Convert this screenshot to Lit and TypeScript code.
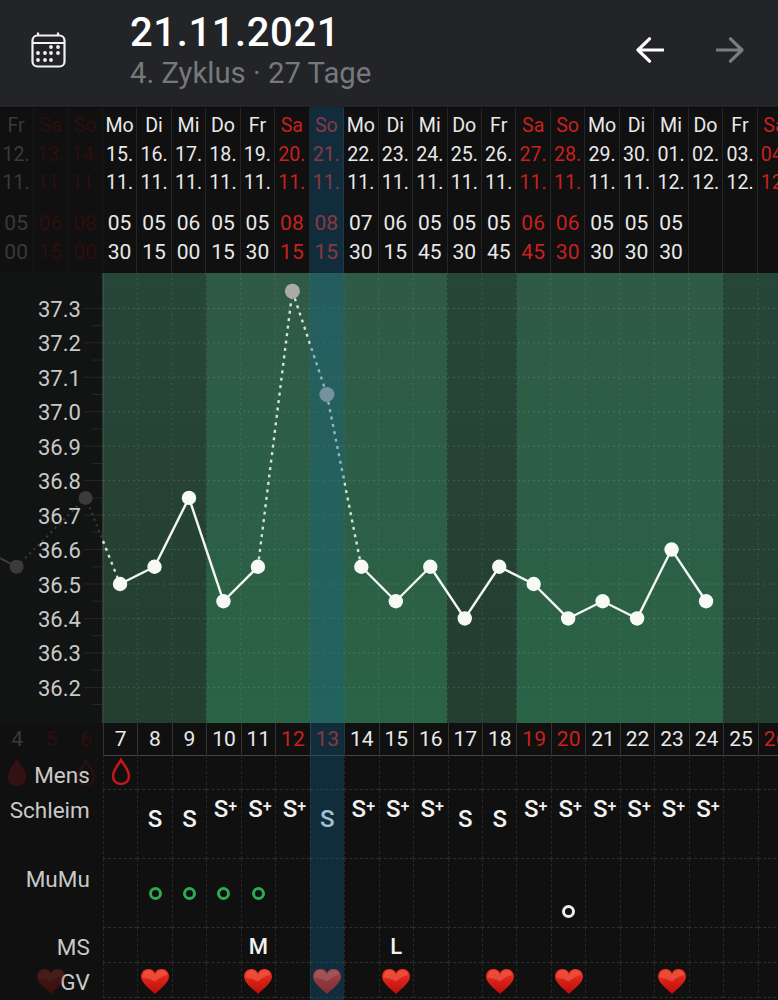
import { LitElement, css, html, svg } from "lit";
import { customElement } from "lit/decorators.js";

const COL = 34.47;
const ORIGIN = -0.6;
const CHART_H = 450;

// day, weekday, date, month, hour, minute
const RAW = [
  "4 Fr 12 11 05 00", "5 Sa 13 11 06 15", "6 So 14 11 08 00", "7 Mo 15 11 05 30",
  "8 Di 16 11 05 15", "9 Mi 17 11 06 00", "10 Do 18 11 05 15", "11 Fr 19 11 05 30",
  "12 Sa 20 11 08 15", "13 So 21 11 08 15", "14 Mo 22 11 07 30", "15 Di 23 11 06 15",
  "16 Mi 24 11 05 45", "17 Do 25 11 05 30", "18 Fr 26 11 05 45", "19 Sa 27 11 06 45",
  "20 So 28 11 06 30", "21 Mo 29 11 05 30", "22 Di 30 11 05 30", "23 Mi 01 12 05 30",
  "24 Do 02 12", "25 Fr 03 12", "26 Sa 04 12",
];

const DAYS = RAW.map((r) => {
  const [n, wd, date, month, hour, min] = r.split(" ");
  return { n: +n, wd, date, month, hour, min };
});

const TEMPS: Record<number, number> = {
  7: 36.5, 8: 36.55, 9: 36.75, 10: 36.45, 11: 36.55, 12: 37.35, 13: 37.05, 14: 36.55, 15: 36.45,
  16: 36.55, 17: 36.4, 18: 36.55, 19: 36.5, 20: 36.4, 21: 36.45, 22: 36.4, 23: 36.6, 24: 36.45,
};

const SCHLEIM: Record<number, string> = {
  8: "S", 9: "S", 10: "S+", 11: "S+", 12: "S+", 13: "S", 14: "S+", 15: "S+", 16: "S+",
  17: "S", 18: "S", 19: "S+", 20: "S+", 21: "S+", 22: "S+", 23: "S+", 24: "S+",
};
const GREEN_RINGS = [8, 9, 10, 11];
const HEARTS = [8, 11, 13, 15, 18, 20, 23];
const MS: Record<number, string> = { 11: "M", 15: "L" };

const cx = (day: number) => ORIGIN + (day - 4 + 0.5) * COL;
const colX = (day: number) => ORIGIN + (day - 4) * COL;
const ty = (t: number) => 311 - (t - 36.5) * 344.5;

const heart = (dim = false) => html`
  <svg class="heart ${dim ? "dim" : ""}" viewBox="0 0 28 25">
    <path fill="url(#heart-fill)" d="M14 25C9 20 0 14 0 7.5C0 3 3.4 0 7.4 0C10.4 0 12.8 1.6 14 4C15.2 1.6 17.6 0 20.6 0C24.6 0 28 3 28 7.5C28 14 19 20 14 25Z"/>
    <path fill="#f4604a" opacity=".6" d="M1.5 9C1 4.5 4 1.2 7.6 1.2C10.4 1.2 12.6 3 14 6C15.4 3.2 17.6 1.2 20.4 1.2C23.6 1.2 26 3.4 26.4 6C22 6.5 18 9 14 12.5C10 10 6 9 1.5 9Z"/>
  </svg>`;

const drop = (cls = "") => html`
  <svg class="drop ${cls}" viewBox="0 0 20 28">
    <path stroke="#c4161c" stroke-width="2.6" d="M10 2C7 7 2 12 2 18C2 23 5.6 26 10 26C14.4 26 18 23 18 18C18 12 13 7 10 2Z"/>
  </svg>`;

@customElement("app-root")
export class AppRoot extends LitElement {
  private weekend(n: number) {
    return (n - 5) % 7 === 0 || (n - 6) % 7 === 0;
  }

  private tone(n: number) {
    return `${n < 7 ? "past" : ""} ${this.weekend(n) ? "red" : ""}`;
  }

  private renderHeader() {
    return html`
      <header>
        <svg class="cal" viewBox="0 0 36 36">
          <g fill="none" stroke="#f2f2f2" stroke-width="2.2">
            <rect x="1.5" y="3.5" width="32" height="31" rx="5"/>
            <path d="M1.5 11H33.5M7 0.5V4M27 0.5V4"/>
          </g>
          <g fill="#f2f2f2">
            ${[[20, 15], [27, 15], [7, 21], [14, 21], [20, 21], [27, 21], [7, 28], [14, 28], [20, 28]].map(
              ([x, y]) => svg`<circle cx=${x} cy=${y} r="1.9"/>`
            )}
          </g>
        </svg>
        <div class="titles">
          <div class="title">21.11.2021</div>
          <div class="sub">4. Zyklus · 27 Tage</div>
        </div>
        <div class="arrows">
          <svg viewBox="0 0 28 26"><path fill="none" stroke="#fff" stroke-width="3.2" stroke-linecap="round" stroke-linejoin="round" d="M27 13H2M13.5 1.8L2 13L13.5 24.2"/></svg>
          <svg viewBox="0 0 28 26"><path fill="none" stroke="#7c7d80" stroke-width="3.2" stroke-linecap="round" stroke-linejoin="round" d="M1 13H26M14.5 1.8L26 13L14.5 24.2"/></svg>
        </div>
      </header>`;
  }

  private renderDates() {
    return html`
      <section class="dates grid">
        ${DAYS.map(
          (d) => html`
            <div class="date-col ${this.tone(d.n)}">
              <span>${d.wd}</span>
              <span>${d.date}.</span>
              <span>${d.month}.</span>
              <span class="hour">${d.hour ?? ""}</span>
              <span class="min">${d.min ?? ""}</span>
            </div>`
        )}
      </section>`;
  }

  private renderChart() {
    const bands: [number, number, string][] = [
      [7, 10, "url(#band-dark)"],
      [10, 17, "url(#band-light)"],
      [17, 19, "url(#band-dark)"],
      [19, 25, "url(#band-light)"],
      [25, 28, "url(#band-dark)"],
    ];
    const scale = Array.from({ length: 12 }, (_, i) => 36.2 + i * 0.1);
    const ticks = Array.from({ length: 12 }, (_, i) => 36.15 + i * 0.1);
    const days = Object.keys(TEMPS).map(Number);
    const dotted = [[11, 12], [12, 13], [13, 14]];
    const solid = days.slice(0, -1).filter((n) => !dotted.some(([a]) => a === n));
    const p = (n: number) => `${cx(n)},${ty(TEMPS[n])}`;

    return html`
      <svg class="chart" viewBox="0 0 778 ${CHART_H}" width="778" height=${CHART_H}>
        <defs>
          <linearGradient id="band-dark" x1="0" y1="0" x2="0" y2="1">
            <stop offset="0" stop-color="#27463a"/><stop offset="1" stop-color="#243e30"/>
          </linearGradient>
          <linearGradient id="band-light" x1="0" y1="0" x2="0" y2="1">
            <stop offset="0" stop-color="#2f5a46"/><stop offset="1" stop-color="#2a6345"/>
          </linearGradient>
          <linearGradient id="heart-fill" x1="0" y1="0" x2="0" y2="1">
            <stop offset="0" stop-color="#ee3526"/><stop offset="1" stop-color="#bd0c08"/>
          </linearGradient>
        </defs>
        <rect width="103" height=${CHART_H} fill="#111412"/>
        ${bands.map(([a, b, f]) => svg`<rect x=${colX(a)} width=${(b - a) * COL} height=${CHART_H} fill=${f}/>`)}

        ${ticks.map((t) => svg`<path d="M92 ${ty(t)}H102" stroke="#fff" stroke-opacity=".09"/>`)}
        ${scale.map(
          (t) => svg`
            <path d="M84 ${ty(t)}H102" stroke="#fff" stroke-opacity=".09"/>
            <path d="M103 ${ty(t)}H778" stroke="#fff" stroke-opacity=".14" stroke-dasharray="2 3"/>
            <text x="38" y=${ty(t) + 8.5}>${t.toFixed(1)}</text>`
        )}
        ${DAYS.filter((d) => d.n >= 8).map(
          (d) => svg`<path d="M${colX(d.n)} 0V${CHART_H}" stroke="#fff" stroke-opacity=".1" stroke-dasharray="2 3"/>`
        )}
        <path d="M${colX(7)} 0V${CHART_H}" stroke="#fff" stroke-opacity=".18"/>

        <g stroke="#3c3c3c" stroke-width="2" fill="none">
          <path d="M0 ${ty(36.575)}L${cx(4)} ${ty(36.55)}"/>
          <path stroke-dasharray="2 4" d="M${cx(4)} ${ty(36.55)}L${cx(6)} ${ty(36.75)}L103 ${ty(36.625)}"/>
        </g>
        <circle cx=${cx(4)} cy=${ty(36.55)} r="7" fill="#3b3b3b"/>
        <circle cx=${cx(6)} cy=${ty(36.75)} r="7" fill="#3b3b3b"/>

        <g fill="none" stroke="#d5e2da" stroke-width="2.4" stroke-dasharray="3 4.5">
          <path d="M103 ${ty(36.625)}L${p(7)}"/>
          ${dotted.map(([a, b]) => svg`<path d="M${p(a)}L${p(b)}"/>`)}
        </g>
        <g fill="none" stroke="#f4f7f3" stroke-width="2.4">
          ${solid.map((n) => svg`<path d="M${p(n)}L${p(n + 1)}"/>`)}
        </g>
        ${days.map((n) => {
          const grey = n === 12 || n === 13;
          return svg`<circle cx=${cx(n)} cy=${ty(TEMPS[n])} r=${grey ? 7.5 : 7.2} fill=${grey ? "#ababab" : "#f7f9f5"}/>`;
        })}
      </svg>`;
  }

  private renderSchleim(n: number) {
    const v = SCHLEIM[n];
    if (!v) return "";
    return v === "S"
      ? html`<b class="low">S</b>`
      : html`<b class="high">S<small>+</small></b>`;
  }

  private renderRows() {
    const active = DAYS.filter((d) => d.n >= 7);
    return html`
      <section class="grid day-row">
        ${DAYS.map((d) => html`<div class="day-num ${this.tone(d.n)}">${d.n}</div>`)}
      </section>

      <section class="grid row mens">
        <div class="mark" style="grid-column:1">${drop("dim")}</div>
        <div class="mark" style="grid-column:3">${drop("faint")}</div>
        <div class="label">Mens</div>
        ${active.map((d) => html`<div class="cell" style="grid-column:${d.n - 3}">${d.n === 7 ? drop() : ""}</div>`)}
      </section>

      <section class="grid row tall">
        <div class="label">Schleim</div>
        ${active.map((d) => html`<div class="cell" style="grid-column:${d.n - 3}">${this.renderSchleim(d.n)}</div>`)}
      </section>

      <section class="grid row tall">
        <div class="label">MuMu</div>
        ${active.map(
          (d) => html`<div class="cell" style="grid-column:${d.n - 3}">
            ${GREEN_RINGS.includes(d.n) ? html`<i class="ring"></i>` : ""}
            ${d.n === 20 ? html`<i class="ring white"></i>` : ""}
          </div>`
        )}
      </section>

      <section class="grid row">
        <div class="label">MS</div>
        ${active.map((d) => html`<div class="cell" style="grid-column:${d.n - 3}"><b class="letter">${MS[d.n] ?? ""}</b></div>`)}
      </section>

      <section class="grid row">
        <div class="mark" style="grid-column:2">${heart(true)}</div>
        <div class="label">GV</div>
        ${active.map((d) => html`<div class="cell" style="grid-column:${d.n - 3}">${HEARTS.includes(d.n) ? heart() : ""}</div>`)}
      </section>`;
  }

  render() {
    return html`
      ${this.renderHeader()}
      ${this.renderDates()}
      ${this.renderChart()}
      ${this.renderRows()}
      <div class="today" style="left:${colX(13)}px;width:${COL}px"></div>
    `;
  }

  static styles = css`
    :host {
      display: block;
      position: relative;
      width: 778px;
      height: 1000px;
      overflow: hidden;
      background: #101010;
      color: #e9e9e9;
      font-family: Roboto, "Liberation Sans", sans-serif;
    }

    header {
      height: 107px;
      box-sizing: border-box;
      display: flex;
      align-items: flex-start;
      padding: 32px 34px 0 31px;
      background: #232428;
    }
    .cal {
      width: 36px;
      height: 36px;
      flex: none;
    }
    .titles {
      margin: -22px 0 0 63px;
    }
    .title {
      font-size: 40px;
      font-weight: 500;
      line-height: 46px;
      letter-spacing: 0.6px;
      color: #fff;
    }
    .sub {
      font-size: 29.3px;
      line-height: 34px;
      color: #77787c;
    }
    .arrows {
      margin: 5px 0 0 auto;
      display: flex;
      gap: 52px;
    }
    .arrows svg {
      width: 28px;
      height: 26px;
    }

    .grid {
      display: grid;
      grid-template-columns: repeat(23, ${COL}px);
      margin-left: ${ORIGIN}px;
    }

    .dates {
      height: 166px;
      box-sizing: border-box;
      border-top: 1px solid #0c0c0c;
    }
    .date-col {
      display: flex;
      flex-direction: column;
      align-items: center;
      padding-top: 4px;
      font-size: 19.6px;
      line-height: 28.5px;
      border-right: 1px solid #262626;
      box-sizing: border-box;
    }
    .date-col span {
      display: block;
      height: 28.5px;
    }
    .date-col .hour {
      margin-top: 11.5px;
      font-size: 21px;
    }
    .date-col .min {
      font-size: 21px;
    }

    .past {
      color: #3a3a3a;
      border-color: #181818;
    }
    .red {
      color: #c8201f;
    }
    .past.red {
      color: #2e0e0e;
    }

    .chart {
      display: block;
    }
    .chart text {
      font-size: 22px;
      fill: #c9c9c9;
    }

    .day-row {
      height: 32px;
      box-sizing: border-box;
    }
    .day-num {
      font-size: 21px;
      line-height: 32px;
      text-align: center;
      border-left: 1px solid #333;
      border-bottom: 1px solid #444;
    }
    .day-num.past {
      border-color: transparent;
    }

    .row {
      height: 35px;
      grid-template-rows: 100%;
    }
    .row.tall {
      height: 69px;
    }
    .row > * {
      grid-row: 1;
    }
    .label {
      grid-column: 1 / 4;
      padding-right: 13px;
      text-align: right;
      font-size: 22.5px;
      line-height: 38px;
      color: #c9c9c9;
    }
    .row.tall .label {
      line-height: 40px;
    }
    .mens .label {
      line-height: 40px;
    }
    .mark {
      display: flex;
      align-items: center;
      justify-content: center;
    }
    .cell {
      display: flex;
      align-items: center;
      justify-content: center;
      box-sizing: border-box;
      border-left: 1px dashed #282828;
      border-bottom: 1px dashed #2e2e2e;
    }

    .heart {
      width: 28px;
      height: 25px;
      flex: none;
      margin-top: 2px;
    }
    .heart.dim {
      opacity: 0.24;
    }
    .drop {
      width: 20px;
      height: 28px;
      flex: none;
      fill: none;
    }
    .drop.dim {
      fill: #c4161c;
      opacity: 0.2;
    }
    .drop.faint {
      opacity: 0.12;
    }

    b {
      font-weight: 500;
      color: #f2f2f2;
      font-size: 24px;
      line-height: 1;
    }
    b.low {
      margin-top: -10px;
    }
    b.high {
      margin-top: -30px;
      margin-left: 3px;
    }
    b small {
      font-size: 16px;
      vertical-align: 5px;
    }
    b.letter {
      margin-top: 3px;
      font-size: 22px;
    }

    .ring {
      display: block;
      width: 13px;
      height: 13px;
      box-sizing: border-box;
      border: 3px solid #2eaa52;
      border-radius: 50%;
    }
    .ring.white {
      margin-top: 36px;
      border-color: #eee;
    }

    .today {
      position: absolute;
      top: 107px;
      bottom: 0;
      background: rgba(20, 100, 140, 0.35);
      pointer-events: none;
    }
  `;
}
